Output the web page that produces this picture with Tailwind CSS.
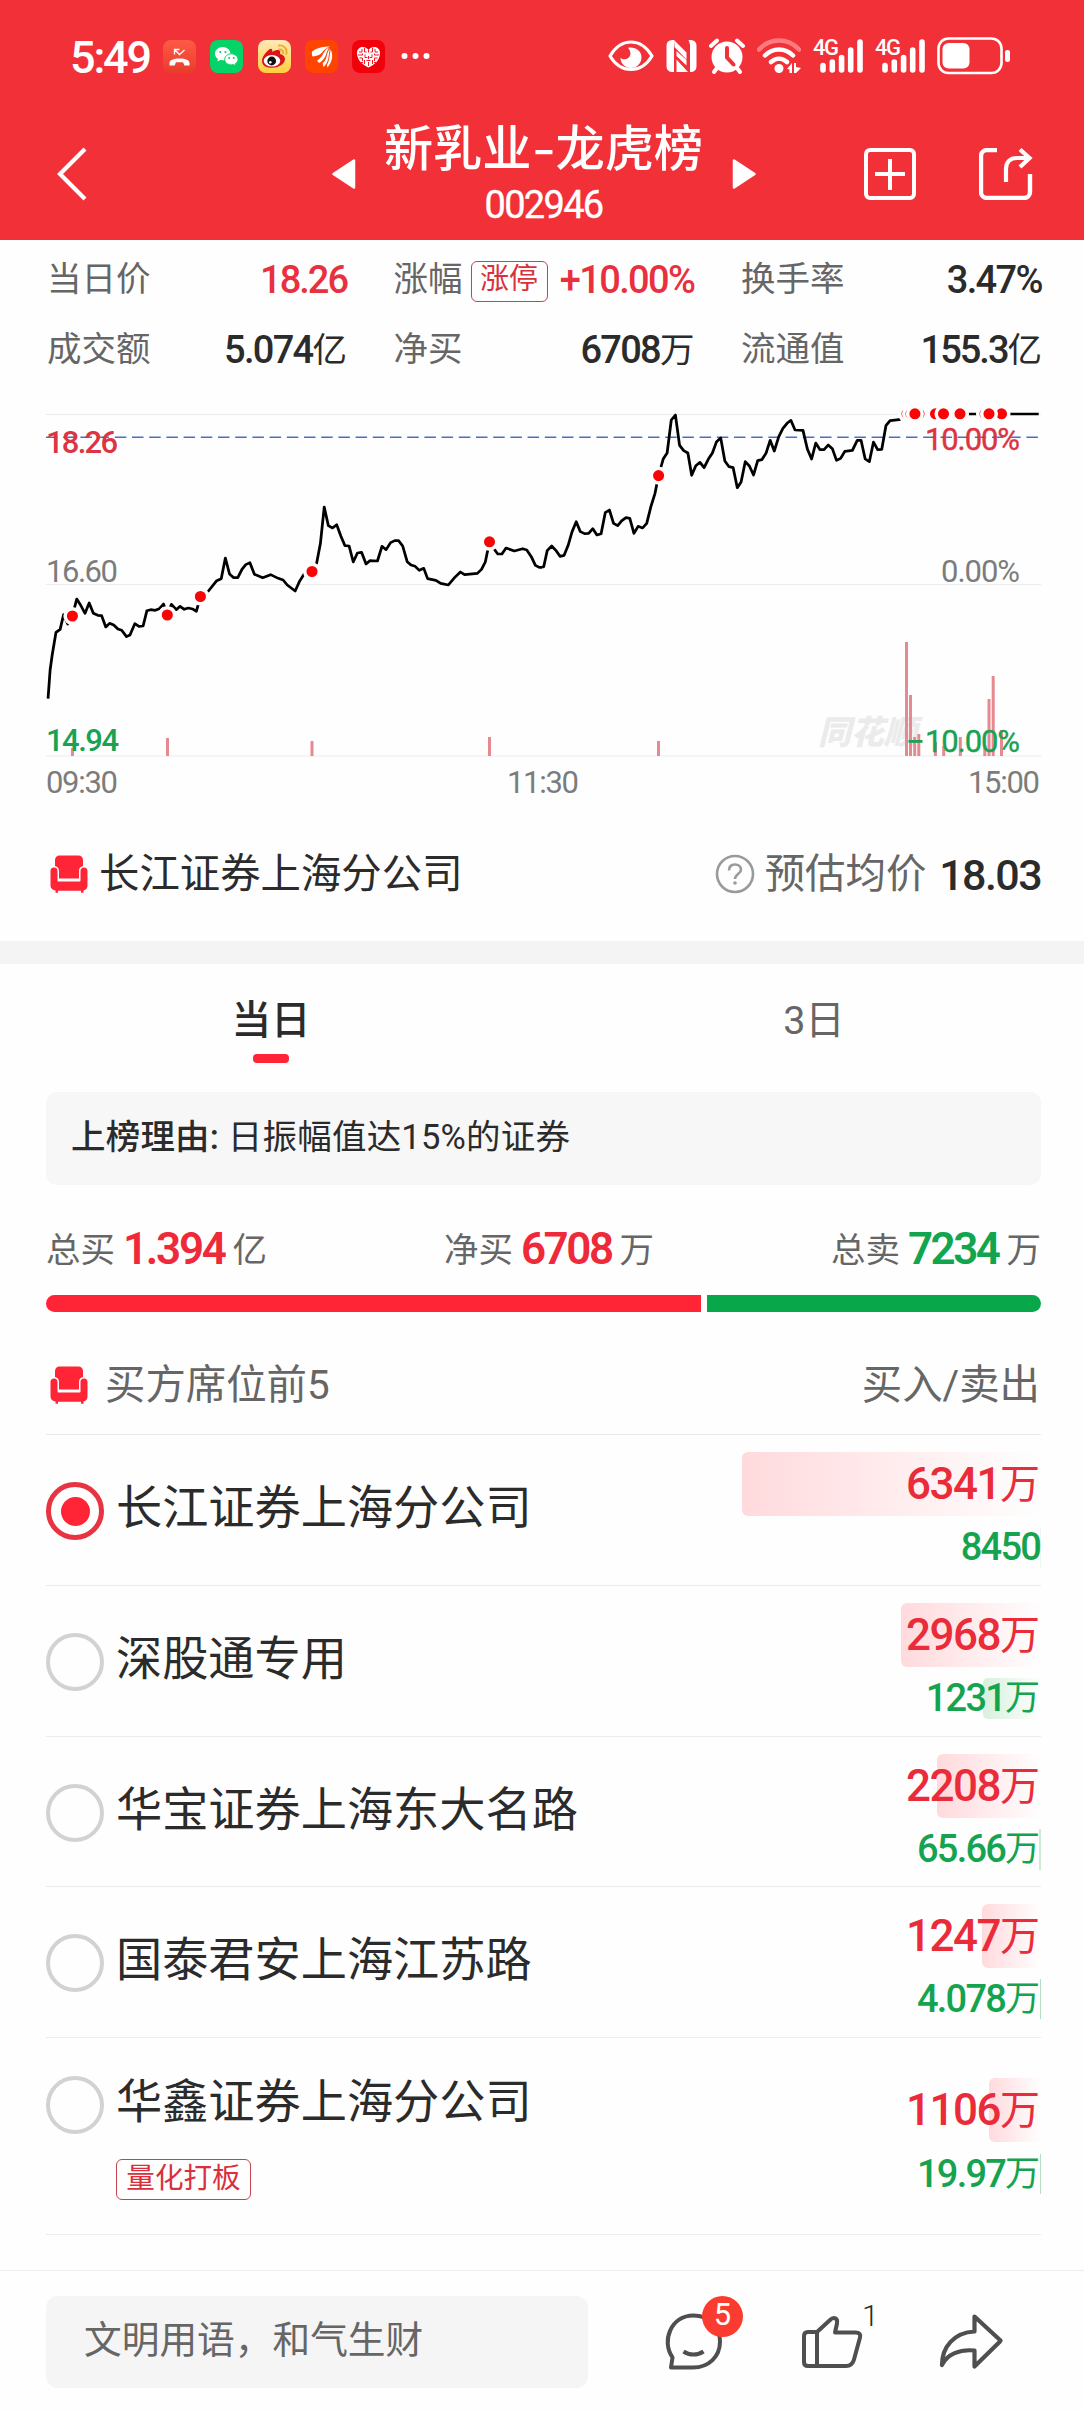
<!DOCTYPE html>
<html lang="zh-CN">
<head>
<meta charset="utf-8">
<title>新乳业-龙虎榜</title>
<script src="https://cdn.jsdelivr.net/npm/@tailwindcss/browser@4"></script>
</head>
<body class="w-[1084px] h-[2412px] overflow-hidden bg-[#fefefe] text-[#2b2b2b] font-['Roboto','Noto_Sans_CJK_SC',sans-serif] flex flex-col">
<svg class="hidden">
  <symbol id="sofa" viewBox="0 0 38 38">
    <path fill="#ff2436" d="M9.500 .5h19a4.500 4.500 0 0 1 4.500 4.500v6c-2.800.5-4 2.500-4 5V23.500H9V16c0-2.500-1.200-4.500-4-5V5A4.500 4.500 0 0 1 9.500 .5z"/>
    <path fill="#ff2436" d="M4 12.500c2.300 0 3.500 1.500 3.500 3.500v9.500a1 1 0 0 0 1 1h21a1 1 0 0 0 1-1V16c0-2 1.200-3.500 3.500-3.500s3.500 1.500 3.500 3.500v14.500a5 5 0 0 1-4 5v2.200h-2.500v-2H8v2H5.500v-2.200a5 5 0 0 1-5-5V16c0-2 1.200-3.500 3.500-3.500z"/>
  </symbol>
  <symbol id="signal" viewBox="0 0 52 36">
    <path stroke="#fff" stroke-width="5.600" stroke-linecap="round" fill="none" d="M10 27.500v4.500M19.300 24v8M28.600 19.500V32M37.700 12v20M47 4v28"/>
  </symbol>
</svg>

<header class="h-[240px] bg-[#f23038] text-white shrink-0">
  <div class="flex h-[112px] items-center pl-[70px] pr-[73px]">
    <span class="w-[93px] text-[45px] leading-[45px] font-medium tracking-[-2.2px] pt-[2px]">5:49</span>
    <div class="flex items-center gap-[14.300px]">
      <svg class="size-[33px]" viewBox="0 0 33 33"><defs><linearGradient id="g1" x2="0" y2="1"><stop stop-color="#ff5a46"/><stop offset="1" stop-color="#e93c2b"/></linearGradient></defs><rect width="33" height="33" rx="8" fill="url(#g1)"/><path d="M6.500 25.500v-2.500c0-3 4-4.500 10-4.500s10 1.500 10 4.500v2.500h-5.200l-1.200-3.200h-7.200l-1.200 3.200z" fill="#fff"/><path d="M11.500 14.500V9.500h5M12 10l4.500 4.500 5-4.500" stroke="#fff" stroke-width="1.300" fill="none"/></svg>
      <svg class="size-[33px]" viewBox="0 0 33 33"><rect width="33" height="33" rx="8" fill="#04d368"/><path fill="#fff" d="M12.700 7C8.500 7 5 10 5 13.700c0 2.200 1.200 4 3 5.200l-.7 2.500 2.900-1.500 2.500.4c4.400 0 7.800-3 7.800-6.600S17 7 12.700 7z"/><path fill="#fff" stroke="#04d368" stroke-width="1" d="M21.300 13.800c-3.700 0-6.600 2.500-6.600 5.600s3 5.500 6.600 5.500l2.200-.3 2.500 1.300-.6-2.200c1.600-1 2.600-2.600 2.600-4.300 0-3.100-3-5.600-6.700-5.600z"/><circle cx="10.300" cy="12" r="1.100" fill="#04d368"/><circle cx="15.500" cy="12" r="1.100" fill="#04d368"/><circle cx="19.200" cy="18" r="1" fill="#04d368"/><circle cx="23.700" cy="18" r="1" fill="#04d368"/></svg>
      <svg class="size-[33px]" viewBox="0 0 33 33"><defs><linearGradient id="g2" x2="0" y2="1"><stop stop-color="#ffe9b8"/><stop offset="1" stop-color="#ffcf3d"/></linearGradient></defs><rect width="33" height="33" rx="8" fill="url(#g2)"/><path fill="#d9141b" d="M4 21c0-4 3.500-8 5.500-10s3-2.500 4-2c1.500.5.500 3 .500 3s5.500-3 7.500-1.500c1.500 1 .500 3.500.500 3.500s5 1 5 5c0 5-6.500 8.800-13 8.800S4 25 4 21z"/><ellipse cx="14" cy="20.800" rx="8.300" ry="5.800" fill="#fff"/><circle cx="13.700" cy="21" r="4.400" fill="#111"/><circle cx="12.300" cy="22.200" r="1.300" fill="#fff"/><path d="M21 5.500c5-.8 8.500 3.500 7.300 8.500M21.500 9.500c2.500-.2 4 1.500 3.500 4" stroke="#f0ab2c" stroke-width="1.900" fill="none" stroke-linecap="round"/></svg>
      <svg class="size-[33px]" viewBox="0 0 33 33"><rect width="33" height="33" rx="8" fill="#ff4400"/><path fill="#fff" d="M7 11.500c5-4 12-5 18-5-4 1.500-5.500 3-7.500 5.500-2.500 3-5.500 4-10 4.500-.7-1.500-.8-3.500-.5-5z"/><path fill="#fff" d="M24 7.500c-4.500 2-5 6-7.500 9-1.500 2-3 3-4.500 4l2 2.500c3-1.500 5-4 6.500-7 1.200-3 1.800-6 3.500-8.500zM25 8c-2.500 3-2.700 7-4 10.500-.8 2-2 3.500-3.500 5l1 3.500c2.500-2 4-5 4.800-8.500.7-3.500.7-7 1.700-10.500zM25.700 9.500c-1.200 5-.7 10-3.700 15.500l.3 2.500c5-5 6.200-12.500 3.400-18z"/></svg>
      <svg class="size-[33px]" viewBox="0 0 33 33"><rect width="33" height="33" rx="8" fill="#f3000d"/><path fill="#fff" d="M16.500 27.500C11 25 5 20.500 5 13c0-3.500 2.500-6 5.500-6 2.800 0 4.500 1.200 6 3 1.500-1.800 3.200-3 6-3 3 0 5.500 2.500 5.500 6 0 7.500-6 12-11.500 14.500z"/><path stroke="#f3000d" stroke-width=".9" fill="none" d="M16.500 9.500v3M16.500 16v3M16.500 22v4M7 12h3v-3M26 12h-3v-3M12.500 8v4h2M20.500 8v4h-2M6 15h4.500v-1.500M27 15h-4.500v-1.500M13 14.500v3h2.500M20 14.500v3h-2.500M7.500 18h3v3M25.500 18h-3v3M9 22.500h2M24 22.500h-2M12.500 20v4M20.500 20v4M14.500 20.500h4"/></svg>
      <svg class="w-[30px] h-[8px] ml-[2px]" viewBox="0 0 30 8"><g fill="#fff"><circle cx="3.500" cy="4" r="3"/><circle cx="14.500" cy="4" r="3"/><circle cx="25.500" cy="4" r="3"/></g></svg>
    </div>
    <div class="ml-auto flex items-center gap-[12px]">
      <svg class="w-[46px] h-[34px]" viewBox="0 0 46 34"><path d="M2 17C8 7 15 3 23 3s15 4 21 14c-6 10-13 13.500-21 13.500S8 27 2 17z" fill="none" stroke="#fff" stroke-width="3.200" stroke-linejoin="round"/><path fill="#fff" d="M22 8.500c7.500 0 11.500 4.500 11.500 10S29 29 23 29s-10.500-4.500-10.500-10.300c1.500 1.300 3.300 2 5.200 1.500C23 19 24 13 20 8.700z"/></svg>
      <svg class="w-[31px] h-[34px]" viewBox="0 0 31 34"><path fill="#fff" d="M6 1h2v32H6a5.500 5.500 0 0 1-5.500-5.500v-21A5.500 5.500 0 0 1 6 1zM8 1l12.500 12.500v7L8.500 8zM22.500 1H25a5.500 5.500 0 0 1 5.500 5.500v21A5.500 5.500 0 0 1 25 33h-1V5.500zM10.500 12l10 9v5.500l-10-9.500zM10.500 20.500L22 33H10.500z"/></svg>
      <svg class="w-[36px] h-[36px]" viewBox="0 0 36 36"><circle cx="18" cy="19" r="15.500" fill="#fff"/><path d="M2 8l6-5.500M34 8l-6-5.500M8 30l-3 4M28 30l3 4" stroke="#fff" stroke-width="4" stroke-linecap="round"/><path d="M18 10v9.500l6.500 7" stroke="#f23038" stroke-width="4" stroke-linecap="round" fill="none"/></svg>
      <svg class="w-[44px] h-[36px]" viewBox="0 0 44 36"><path d="M2 11.500C13-.500 31-.500 42 11.500" stroke="#ff7b80" stroke-width="4.500" fill="none" stroke-linecap="round"/><path d="M8 17.500c8-8 20-8 28 0M14 24c5-4.500 11-4.500 16 0" stroke="#fff" stroke-width="4.500" fill="none" stroke-linecap="round"/><circle cx="22" cy="30.500" r="4.500" fill="#fff"/><path d="M30 31l5-6v10h-2.500v-3.500zM37 25h2v4l5 1-5 5h-2z" fill="#fff"/></svg>
      <div class="relative w-[50px] h-[36px]"><svg class="w-[52px] h-[36px]"><use href="#signal"/></svg><span class="absolute left-0 top-0 text-[22px] leading-[20px] font-medium tracking-[-1.5px]">4G</span></div>
      <div class="relative w-[50px] h-[36px]"><svg class="w-[52px] h-[36px]"><use href="#signal"/></svg><span class="absolute left-0 top-0 text-[22px] leading-[20px] font-medium tracking-[-1.5px]">4G</span></div>
      <svg class="w-[74px] h-[38px]" viewBox="0 0 74 38"><rect x="1.500" y="1.500" width="63" height="34.500" rx="10" fill="none" stroke="#fff" stroke-width="2.600"/><rect x="5.500" y="6" width="27" height="25.500" rx="6" fill="#fff"/><rect x="68" y="13" width="5" height="12" rx="2.200" fill="#fff"/></svg>
    </div>
  </div>
  <div class="flex h-[128px] items-start pl-[57px] pr-[51px] pt-[34px]">
    <svg class="w-[30px] h-[56px]" viewBox="0 0 30 56"><path d="M28 3L3 28l25 25" fill="none" stroke="#fff" stroke-width="4.200"/></svg>
    <svg class="ml-[245px] mt-[13px] w-[24px] h-[30px]" viewBox="0 0 24 30"><path d="M22 1.500v27L1.500 15z" fill="#fff" stroke="#fff" stroke-width="2.500" stroke-linejoin="round"/></svg>
    <div class="w-[375px] -mt-[29px] text-center">
      <h1 class="text-[49.200px] leading-[56px] font-medium font-['Noto_Sans_CJK_SC',sans-serif] whitespace-nowrap">新乳业<span class="inline-block w-[24px] scale-x-[1.300]">-</span>龙虎榜</h1>
      <p class="text-[38px] leading-[44px] mt-[10px] font-normal tracking-[-1.700px] [-webkit-text-stroke:0.4px_white]">002946</p>
    </div>
    <svg class="ml-[1px] mt-[13px] w-[24px] h-[30px]" viewBox="0 0 24 30"><path d="M2 1.500v27L22.500 15z" fill="#fff" stroke="#fff" stroke-width="2.500" stroke-linejoin="round"/></svg>
    <svg class="ml-auto mt-[2px] w-[52px] h-[52px]" viewBox="0 0 52 52"><rect x="2" y="2" width="48" height="48" rx="4" fill="none" stroke="#fff" stroke-width="4"/><path d="M26 11v31M11 26h30" stroke="#fff" stroke-width="4"/></svg>
    <svg class="ml-[63px] mt-[2px] w-[54px] h-[52px]" viewBox="0 0 54 52"><path d="M18 2H8a6 6 0 0 0-6 6v36a6 6 0 0 0 6 6h37a6 6 0 0 0 6-6V26" fill="none" stroke="#fff" stroke-width="4.400"/><path d="M27 34V21c0-7 4-11 11-11h12M41 1.500L50.500 10 41 19" fill="none" stroke="#fff" stroke-width="4.200"/></svg>
  </div>
</header>

<section class="ml-[47px] mr-[42px] mt-[5px] grid grid-cols-[300px_301px_301px] gap-x-[46.500px] text-[34.500px] shrink-0">
  <div class="flex h-[70px] items-center justify-between"><span class="text-[#666]">当日价</span><span class="text-[38px] font-medium tracking-[-2px] text-[#e8303e]">18.26</span></div>
  <div class="flex h-[70px] items-center whitespace-nowrap"><span class="text-[#666]">涨幅</span><span class="ml-[8px] mt-[3px] flex h-[41px] w-[77px] items-center justify-center rounded-[6px] border border-[#c4444e] pb-[3px] text-[29px] text-[#d8303c]">涨停</span><span class="ml-auto text-[38px] font-medium tracking-[-1.600px] text-[#e8303e]">+10.00%</span></div>
  <div class="flex h-[70px] items-center justify-between"><span class="text-[#666]">换手率</span><span class="text-[38px] font-medium tracking-[-1.600px]">3.47%</span></div>
  <div class="flex h-[70px] items-center justify-between"><span class="text-[#666]">成交额</span><span><b class="text-[38px] font-medium tracking-[-1.700px] align-[-1px]">5.074</b>亿</span></div>
  <div class="flex h-[70px] items-center justify-between"><span class="text-[#666]">净买</span><span><b class="text-[38px] font-medium tracking-[-1.700px] align-[-1px]">6708</b>万</span></div>
  <div class="flex h-[70px] items-center justify-between"><span class="text-[#666]">流通值</span><span><b class="text-[38px] font-medium tracking-[-2px] align-[-1px]">155.3</b>亿</span></div>
</section>

<svg class="h-[415px] w-[1084px] shrink-0 font-['Roboto',sans-serif]" viewBox="0 385 1084 415">
  <path d="M46 414.500H1041M46 584.500H1041M46 756H1041" stroke="#ececec" stroke-width="1.200"/>
  <text x="818" y="744" font-size="33" font-weight="900" font-style="italic" fill="#ebebeb" font-family="Noto Sans CJK SC, sans-serif" textLength="99">同花顺</text>
  <g stroke="#e58a90" stroke-width="3">
    <path d="M72.500 748V756M167.500 738V756M312 741V756M489.500 737V756M658.500 741V756M906.500 642V756M910.500 695V756M914.700 737V756M918.800 734V756M935.400 742V756M943.700 746V756M960.300 737V756M984.800 745V756M989 699V756M993.200 676V756M1001.500 730V756"/>
  </g>
  <path d="M46 437.300H1041" stroke="#4a6fc0" stroke-width="1.500" stroke-dasharray="11.500 5.700"/>
  <g fill="none" stroke="#000" stroke-linejoin="round">
    <path transform="translate(0 400) scale(.34566 .33333)" stroke-width="8" d="M139 896L145 810 151 765 162 697 174 688 184 644 196 672 209 650 222 597 233 615 246 640 258 609 270 640 283 646 294 647 306 681 317 670 329 675 341 687 352 691 366 710 376 705 390 671 402 679 414 678 425 632 436 629 449 631 461 626 473 612 484 645 496 613 510 629 521 619 533 628 545 624 557 627 568 634 580 590 603 573 627 542 640 536 652 474 664 522 676 533 688 533 700 508 711 494 723 488 736 523 760 533 783 524 805 535 819 540 831 555 854 573 866 545 880 522 902 515 916 490 927 430 938 321 950 377 962 384 974 374 986 408 998 437 1010 438 1022 486 1034 459 1046 457 1059 492 1070 482 1092 483 1105 439 1117 449 1130 428 1142 422 1153 422 1165 438 1178 485 1189 495 1201 499 1213 511 1226 505 1237 536 1261 541 1275 550 1297 555 1315 533 1332 516 1344 524 1381 520 1393 508 1404 486 1416 426 1430 448 1440 462 1452 462 1464 444 1488 453 1512 446 1524 450 1537 470 1549 496 1560 502 1568 502"/>
    <path transform="translate(542 400) scale(.34566 .33333)" stroke-width="8" d="M0 502L5 500 15 452 28 438 40 451 52 469 64 466 76 435 87 395 99 365 111 395 123 401 135 400 147 386 159 405 171 401 183 338 195 330 207 370 219 377 231 362 243 353 254 355 266 400 278 379 291 384 303 370 315 320 327 280 337 227 345 198 351 176 362 159 374 60 386 45 398 136 410 152 422 159 433 226 445 197 457 187 469 203 481 178 493 159 505 125 517 114 529 183 541 200 553 203 565 263 576 246 588 185 600 198 612 225 624 182 636 179 648 160 660 121 672 153 685 110 697 85 709 70 720 61 732 90 755 91 768 148 780 177 792 129 804 149 816 149 828 135 840 146 852 181 864 175 876 154 898 151 912 121 923 121 935 177 947 185 959 126 971 149 983 148 995 77 1007 62 1033 59 1080 42H1437"/>
  </g>
  <g fill="#fa0505" stroke="#fefefe" stroke-width="3.500">
    <circle cx="72.400" cy="616" r="7.300"/><circle cx="167.300" cy="615" r="7.300"/><circle cx="200.400" cy="596.500" r="7.300"/><circle cx="312" cy="571.500" r="7.300"/><circle cx="489.500" cy="541.800" r="7.300"/><circle cx="658.600" cy="475.600" r="7.300"/>
    <circle cx="907" cy="413.800" r="7.300"/><circle cx="911" cy="413.800" r="7.300"/><circle cx="919" cy="413.800" r="7.300"/><circle cx="914.900" cy="413.800" r="7.300"/><circle cx="935.500" cy="413.800" r="7.300"/><circle cx="943.500" cy="413.800" r="7.300"/><circle cx="960" cy="413.800" r="7.300"/><circle cx="985" cy="413.800" r="7.300"/><circle cx="1001.500" cy="413.800" r="7.300"/><circle cx="989" cy="413.800" r="7.300"/>
  </g>
  <g font-size="31" fill="#7c7c7c">
    <text x="46" y="452.500" textLength="72" fill="#dc3442" font-weight="500">18.26</text>
    <text x="46" y="581.500" textLength="72">16.60</text>
    <text x="46" y="750.500" textLength="73" fill="#1aa152" font-weight="500">14.94</text>
    <text x="925" y="450" textLength="95" fill="#dc3442" stroke="#dc3442" stroke-width=".4">10.00%</text>
    <text x="941" y="581.500" textLength="79">0.00%</text>
    <rect x="908.500" y="740" width="14" height="2.800" fill="#1aa152"/>
    <text x="925" y="752" textLength="95" fill="#1aa152" stroke="#1aa152" stroke-width=".4">10.00%</text>
    <text x="46" y="792.500" textLength="72">09:30</text>
    <text x="507" y="792.500" textLength="72">11:30</text>
    <text x="968" y="792.500" textLength="72">15:00</text>
  </g>
</svg>

<section class="flex h-[141px] items-start pl-[50px] pr-[43px] pt-[44px] shrink-0 text-[40.400px] leading-[58px]">
  <svg class="mt-[11px] size-[38px]"><use href="#sofa"/></svg>
  <span class="ml-[11px] pt-[2px]">长江证券上海分公司</span>
  <svg class="ml-auto mt-[10px] size-[40px]" viewBox="0 0 40 40"><circle cx="20" cy="20" r="18" fill="none" stroke="#9a9a9a" stroke-width="2.600"/><path d="M14 16.500c0-4 2.500-6 6-6s6 2 6 5.200c0 4.300-6 4.500-6 9.300" fill="none" stroke="#9a9a9a" stroke-width="2.600"/><circle cx="20" cy="29" r="1.800" fill="#9a9a9a"/></svg>
  <span class="ml-[10px] pt-[2px] text-[#666]">预估均价</span>
  <span class="ml-[13px] text-[43px] font-medium tracking-[-1.600px] pt-[2px]">18.03</span>
</section>
<div class="h-[23px] bg-[#f4f4f4] shrink-0"></div>

<nav class="grid grid-cols-2 h-[128px] pt-[29px] text-center text-[39.500px] leading-[56px] shrink-0">
  <div class="flex flex-col items-center"><span class="font-medium">当日</span><i class="mt-[5px] h-[9px] w-[36px] rounded-[4px] bg-[#ff2436]"></i></div>
  <div class="pl-[2px] text-[#666]">3日</div>
</nav>

<div class="ml-[46px] mr-[43px] h-[93px] rounded-[11px] bg-[#f7f7f7] pl-[25px] text-[34.500px] leading-[90px] tracking-[0.200px] shrink-0"><span class="font-medium">上榜理由:</span> 日振幅值达15%的证券</div>

<section class="ml-[46px] mr-[43px] mt-[34px] flex h-[62px] items-baseline justify-between text-[34.500px] leading-[60px] text-[#666] shrink-0">
  <div>总买<b class="mx-[8px] text-[44px] font-semibold tracking-[-2.300px] align-[-2px] text-[#ee2a3a]">1.394</b>亿</div>
  <div>净买<b class="mx-[8px] text-[44px] font-semibold tracking-[-2.500px] align-[-2px] text-[#ee2a3a]">6708</b>万</div>
  <div>总卖<b class="mx-[8px] text-[44px] font-semibold tracking-[-2.500px] align-[-2px] text-[#12a54e]">7234</b>万</div>
</section>
<div class="ml-[46px] mr-[43px] mt-[14px] flex h-[17px] gap-[6px] shrink-0"><div class="w-[655px] rounded-l-full bg-[#ff2436]"></div><div class="grow rounded-r-full bg-[#08a84a]"></div></div>

<div class="ml-[46px] mr-[43px] flex h-[123px] items-start border-b border-[#e9e9e9] pt-[43px] text-[40.400px] leading-[58px] text-[#666] shrink-0">
  <svg class="ml-[4px] mt-[11px] size-[38px]"><use href="#sofa"/></svg><span class="ml-[17px] pt-[2px]">买方席位前5</span><span class="ml-auto mr-[1px] pt-[2px]">买入/卖出</span>
</div>

<ul class="ml-[46px] mr-[43px] shrink-0">
  <li class="flex h-[151px] border-b border-[#ececec]">
    <span class="mt-[47px] flex size-[58px] items-center justify-center rounded-full border-[5px] border-[#e83442]"><i class="size-[29px] rounded-full bg-[#ff2436]"></i></span>
    <span class="ml-[12px] mt-[39px] text-[46.200px] leading-[68px]">长江证券上海分公司</span>
    <div class="ml-auto mt-[17px] flex flex-col items-end gap-[11px]">
      <div class="flex h-[64px] justify-end whitespace-nowrap rounded-l-[6px] bg-linear-to-r from-[#ffdadd] to-[#fefefe] pr-[1px] text-[40px] leading-[64px] text-[#ea2c3a]" style="width:299px"><span><b class="text-[44px] font-medium tracking-[-1.500px] align-[-1px]">6341</b>万</span></div>
      <div class="flex h-[41px] justify-end whitespace-nowrap rounded-l-[5px] bg-linear-to-r from-[#d6f1dd] to-[#fefefe] pr-[1px] text-[35px] leading-[41px] text-[#16a350]" style="width:0px"><b class="text-[38px] font-medium tracking-[-1.800px]">8450</b></div>
    </div>
  </li>
  <li class="flex h-[151px] border-b border-[#ececec]">
    <span class="mt-[47px] size-[58px] rounded-full border-[4px] border-[#d2d2d2]"></span>
    <span class="ml-[12px] mt-[39px] text-[46.200px] leading-[68px]">深股通专用</span>
    <div class="ml-auto mt-[17px] flex flex-col items-end gap-[11px]">
      <div class="flex h-[64px] justify-end whitespace-nowrap rounded-l-[6px] bg-linear-to-r from-[#ffdadd] to-[#fefefe] pr-[1px] text-[40px] leading-[64px] text-[#ea2c3a]" style="width:140px"><span><b class="text-[44px] font-medium tracking-[-1.500px] align-[-1px]">2968</b>万</span></div>
      <div class="flex h-[41px] justify-end whitespace-nowrap rounded-l-[5px] bg-linear-to-r from-[#d6f1dd] to-[#fefefe] pr-[1px] text-[35px] leading-[40px] text-[#16a350]" style="width:58px"><span><b class="text-[38px] font-medium tracking-[-1.800px] align-[-1px]">1231</b>万</span></div>
    </div>
  </li>
  <li class="flex h-[150px] border-b border-[#ececec]">
    <span class="mt-[47px] size-[58px] rounded-full border-[4px] border-[#d2d2d2]"></span>
    <span class="ml-[12px] mt-[39px] text-[46.200px] leading-[68px]">华宝证券上海东大名路</span>
    <div class="ml-auto mt-[17px] flex flex-col items-end gap-[11px]">
      <div class="flex h-[64px] justify-end whitespace-nowrap rounded-l-[6px] bg-linear-to-r from-[#ffdadd] to-[#fefefe] pr-[1px] text-[40px] leading-[64px] text-[#ea2c3a]" style="width:104px"><span><b class="text-[44px] font-medium tracking-[-1.500px] align-[-1px]">2208</b>万</span></div>
      <div class="flex h-[41px] justify-end whitespace-nowrap bg-[#cdebd5] pr-[1px] text-[35px] leading-[40px] text-[#16a350]" style="width:2px"><span><b class="text-[38px] font-medium tracking-[-1.800px] align-[-1px]">65.66</b>万</span></div>
    </div>
  </li>
  <li class="flex h-[151px] border-b border-[#ececec]">
    <span class="mt-[47px] size-[58px] rounded-full border-[4px] border-[#d2d2d2]"></span>
    <span class="ml-[12px] mt-[39px] text-[46.200px] leading-[68px]">国泰君安上海江苏路</span>
    <div class="ml-auto mt-[17px] flex flex-col items-end gap-[11px]">
      <div class="flex h-[64px] justify-end whitespace-nowrap rounded-l-[6px] bg-linear-to-r from-[#ffdadd] to-[#fefefe] pr-[1px] text-[40px] leading-[64px] text-[#ea2c3a]" style="width:59px"><span><b class="text-[44px] font-medium tracking-[-1.500px] align-[-1px]">1247</b>万</span></div>
      <div class="flex h-[40px] justify-end whitespace-nowrap bg-[#b5dfc1] pr-[1px] text-[35px] leading-[40px] text-[#16a350]" style="width:1px"><span><b class="text-[38px] font-medium tracking-[-1.800px] align-[-1px]">4.078</b>万</span></div>
    </div>
  </li>
  <li class="flex h-[197px] border-b border-[#ececec]">
    <span class="mt-[38px] size-[58px] rounded-full border-[4px] border-[#d2d2d2]"></span>
    <div class="ml-[12px] mt-[30px]">
      <p class="text-[46.200px] leading-[68px]">华鑫证券上海分公司</p>
      <span class="mt-[23px] flex h-[41px] w-[135px] items-center justify-center rounded-[6px] border border-[#c4444e] pb-[2px] text-[28.600px] text-[#d8303c]">量化打板</span>
    </div>
    <div class="ml-auto mt-[40px] flex flex-col items-end gap-[12px]">
      <div class="flex h-[64px] justify-end whitespace-nowrap rounded-l-[6px] bg-linear-to-r from-[#ffdadd] to-[#fefefe] pr-[1px] text-[40px] leading-[64px] text-[#ea2c3a]" style="width:52px"><span><b class="text-[44px] font-medium tracking-[-1.500px] align-[-1px]">1106</b>万</span></div>
      <div class="flex h-[40px] justify-end whitespace-nowrap bg-[#b5dfc1] pr-[1px] text-[35px] leading-[40px] text-[#16a350]" style="width:1px"><span><b class="text-[38px] font-medium tracking-[-1.800px] align-[-1px]">19.97</b>万</span></div>
    </div>
  </li>
</ul>

<footer class="mt-[35px] flex h-[142px] items-start border-t border-[#ededed] pl-[46px] pt-[25px] shrink-0">
  <div class="h-[92px] w-[542px] rounded-[12px] bg-[#f5f5f5] pl-[38px] text-[37.700px] leading-[89px] text-[#666]">文明用语，和气生财</div>
  <div class="relative ml-[77px] mt-[17px] h-[58px] w-[58px]">
    <svg class="size-[58px]" viewBox="0 0 58 58"><path d="M6 54.500l1.500-10C-4 28 6 2.500 28.500 2.500c16 0 26.500 12 26.500 26 0 15-11 26-27 26z" fill="none" stroke="#4f4f4f" stroke-width="4" stroke-linejoin="round"/><path d="M18.500 38.500c6 4 14 4 20 0" fill="none" stroke="#4f4f4f" stroke-width="4"/></svg>
    <span class="absolute left-[37px] -top-[17px] flex size-[41px] items-center justify-center rounded-full bg-[#fb3a30] pb-[3px] text-[31px] text-white">5</span>
  </div>
  <div class="relative ml-[78px] mt-[18px]">
    <svg class="h-[56px] w-[62px]" viewBox="0 0 62 56"><path d="M16 18L29 6c4-4 8-1.500 7 3.500l-2 9h20.500c4 0 5.300 2 4.500 5l-6 22c-1.200 4.500-3.500 6.500-8 6.500H7c-2.500 0-4-1.500-4-4V22c0-2.500 1.500-4 4-4zM16 18v34" fill="none" stroke="#4f4f4f" stroke-width="4" stroke-linejoin="round"/></svg>
    <span class="absolute left-[61px] -top-[14px] text-[30px] leading-[32px] font-light">1</span>
  </div>
  <svg class="ml-[76px] mt-[17px] h-[56px] w-[64px]" viewBox="0 0 64 56"><path d="M35.500 3.500l26 24-1 1.500-25 24.500V37.500C21 36 8 41 3 52 3 34 15 19.500 35.500 18.500z" fill="none" stroke="#4f4f4f" stroke-width="4.200" stroke-linejoin="round"/></svg>
</footer>
</body>
</html>
